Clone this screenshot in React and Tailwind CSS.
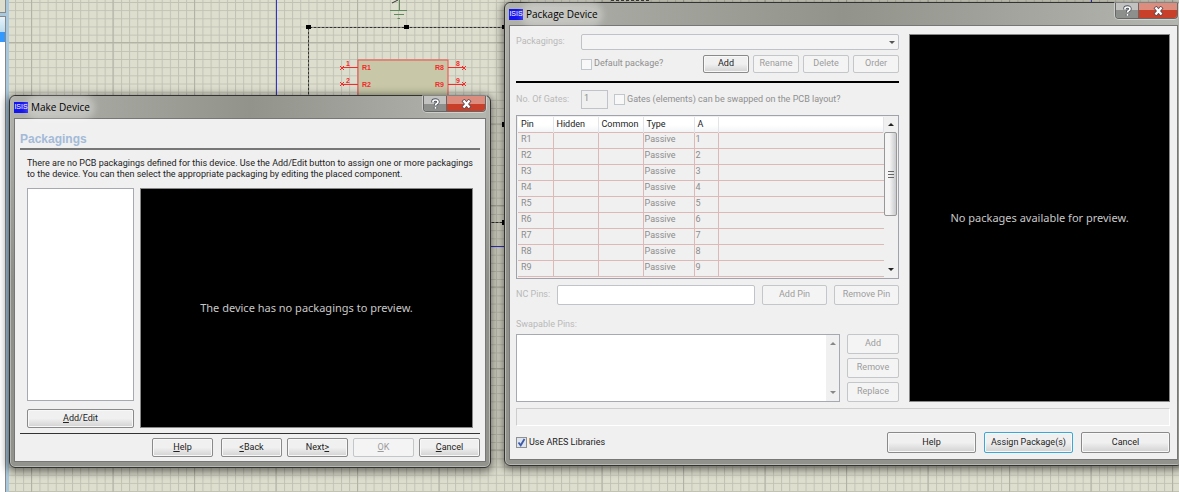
import React, { useState } from 'react';
import clsx from 'clsx';

const PINS = ['R1', 'R2', 'R3', 'R4', 'R5', 'R6', 'R7', 'R8', 'R9'];

// Schematic sheet behind the dialogs
const Schematic = () => (
  <svg className="absolute inset-0 h-full w-full" aria-hidden="true">
    <defs>
      <pattern id="minor" x="31.3" y="42.8" width="8.15" height="8.15" patternUnits="userSpaceOnUse">
        <path d="M0 .5H8.15M.5 0V8.15" stroke="#c2c2b4" />
      </pattern>
      <pattern id="major" x="31" y="42" width="81.5" height="81.5" patternUnits="userSpaceOnUse">
        <path d="M0 .5H81.5M.5 0V81.5" stroke="#b2b2a5" />
      </pattern>
    </defs>
    <rect width="100%" height="100%" fill="#dedecf" />
    <rect width="100%" height="100%" fill="url(#minor)" />
    <rect width="100%" height="100%" fill="url(#major)" />
    <path d="M276.5 0V246.5H1091.5V0" fill="none" stroke="#3434c4" />
    <path d="M308.5 222.5V27.5H504.5V222.5H308.5" fill="none" stroke="#333" strokeDasharray="3 1" />
    <path d="M306 25h5v4h-5zM404 25h5v4h-5zM502 25h5v4h-5zM502 122h5v5h-5zM502 220h5v5h-5z" fill="#000" />
    <path d="M399.500 0V10.500M390 10.500H407M394 14.500H404M397.500 18.500H400" fill="none" stroke="#5d8a5d" />
    <path d="M392 3l6-3" fill="none" stroke="#333" />
    <path d="M611 .500h38" stroke="#444" strokeDasharray="3 2" />
    <rect x="358" y="60" width="90" height="130" fill="#c8c8a8" stroke="#f24a4a" />
    <g stroke="#f22b2b" fill="none">
      <path d="M342 67.500H358M342 84.500H358M448 67.500H464M448 84.500H464" />
      <path d="M340 66l4 4m0-4l-4 4M340 82l4 4m0-4l-4 4M462 66l4 4m0-4l-4 4M462 82l4 4m0-4l-4 4" />
    </g>
    <g fill="#f22b2b" className="font-['Liberation_Sans'] text-[7px] font-bold">
      <text x="362" y="70">R1</text>
      <text x="362" y="87">R2</text>
      <text x="435" y="70">R8</text>
      <text x="435" y="87">R9</text>
      <text x="346" y="66">1</text>
      <text x="346" y="83">2</text>
      <text x="456" y="66">8</text>
      <text x="456" y="83">9</text>
    </g>
  </svg>
);

// Edge of the object selector pane
const SidePane = () => (
  <div className="absolute inset-y-0 left-0 flex w-[9px] flex-col border-r-[3px] border-[#a9c8de]">
    <div className="h-[13px] border-r border-b border-[#888] bg-[#dedecf]" />
    <div className="h-[3px] bg-[#a9c8de]" />
    <div className="h-4 border-t border-r border-[#888] bg-linear-to-b from-[#e6f3fb] to-[#bcdcee]" />
    <div className="h-[10px] border-r border-[#888] bg-[#3399ff]" />
    <div className="flex-1 border-r border-[#888] bg-white" />
  </div>
);

const Window = ({ title, className, children }) => (
  <section
    aria-label={title}
    className={clsx(
      'absolute rounded-md border border-[#333] bg-linear-to-b from-[#b4b5ae] via-[#8e8f89] to-[#92938c] px-1 pb-[5px] shadow-[0_2px_8px_2px_rgba(0,0,0,0.5),inset_0_0_0_1px_#b8b9b2]',
      className
    )}
  >
    <header className="flex h-[22px] items-start justify-between bg-linear-to-r from-[#b0b1aa] via-[#92938b] to-[#b3b5af]">
      <div className="flex h-full items-center gap-[3px]">
        <span className="flex h-[11px] w-[14px] items-center justify-center bg-[#1414ee] font-['Liberation_Sans'] text-[7px] text-white">
          ISIS
        </span>
        <h1 className="rounded-full bg-white/30 font-['Open_Sans',sans-serif] text-[10px] text-black shadow-[0_0_6px_5px_rgba(255,255,255,0.3)]">
          {title}
        </h1>
      </div>
      <div className="flex h-4 overflow-hidden rounded-b border border-t-0 border-[#666] shadow-[0_0_0_1px_rgba(255,255,255,0.4)]">
        <button
          type="button"
          aria-label="Help"
          className="flex w-[23px] items-center justify-center border-r border-[#666] bg-linear-to-b from-[#c2c3c0] from-50% to-[#8d8f8c] to-50%"
        >
          <svg width="9" height="12" viewBox="0 0 9 12" fill="none">
            <path d="M2 4.500V3.500Q2 2 4.500 2T7 4Q7 5 5.500 5.800Q4.500 6.400 4.500 7.500M4.500 9V10.800" stroke="#4d525c" strokeWidth="3.400" />
            <path d="M2 4.500V3.500Q2 2 4.500 2T7 4Q7 5 5.500 5.800Q4.500 6.400 4.500 7.500M4.500 9V10.800" stroke="#fff" strokeWidth="1.700" />
          </svg>
        </button>
        <button
          type="button"
          aria-label="Close"
          className="flex w-[38px] items-center justify-center bg-linear-to-b from-[#dd8d7e] from-50% to-[#c8402a] to-50%"
        >
          <svg width="11" height="10" viewBox="0 0 11 10" fill="none">
            <path d="M2 1L9 9M9 1L2 9" stroke="#5f4a52" strokeWidth="4" />
            <path d="M2.500 1.500L8.500 8.500M8.500 1.500L2.500 8.500" stroke="#fff" strokeWidth="2.300" />
          </svg>
        </button>
      </div>
    </header>
    <div className="border border-[#777] bg-[#f0f0f0] font-['Roboto',sans-serif] text-[9px] text-[#222]">
      {children}
    </div>
  </section>
);

const Button = ({ children, className, primary, disabled }) => (
  <button
    type="button"
    disabled={disabled}
    className={clsx(
      'flex items-center justify-center rounded-xs border whitespace-nowrap',
      disabled && 'border-[#c3c7ca] bg-[#f4f4f4] text-[#9c9c9c]',
      !disabled && 'bg-linear-to-b from-[#f0f0f0] from-50% to-[#d2d2d2] inset-shadow-[0_0_0_1px_#f8f8f8]',
      !disabled && (primary ? 'border-[#3ca6d6] ring-1 ring-[#8fd8f5] ring-inset' : 'border-[#8a8a8a]'),
      className
    )}
  >
    {children}
  </button>
);

const Checkbox = ({ label, disabled, checked, onChange }) => (
  <label className={clsx('flex items-center gap-0.5 whitespace-nowrap', disabled ? 'text-[#8f8f8f]' : 'text-[#222]')}>
    <span className="grid">
      <input
        type="checkbox"
        disabled={disabled}
        checked={checked}
        onChange={onChange}
        className={clsx(
          'col-start-1 row-start-1 size-[11px] appearance-none border',
          disabled ? 'border-[#c0c8cc] bg-[#f8f8f8]' : 'border-[#8e8f8f] bg-[#dfe5ee]'
        )}
      />
      {checked && (
        <svg className="pointer-events-none col-start-1 row-start-1" width="11" height="11" viewBox="0 0 11 11" fill="none">
          <path d="M2.500 5.500L4.700 8.300L8.500 2" stroke="#3d5aa8" strokeWidth="1.800" />
        </svg>
      )}
    </span>
    {label}
  </label>
);

const Arrow = ({ up, className }) => (
  <svg width="6" height="3" viewBox="0 0 6 3" className={className} aria-hidden="true">
    <path d={up ? 'M0 3L3 0L6 3Z' : 'M0 0H6L3 3Z'} fill="currentColor" />
  </svg>
);

const Preview = ({ children, className }) => (
  <div
    className={clsx(
      "flex items-center justify-center border border-[#888] bg-black font-['Noto_Sans',sans-serif] text-[11px] text-[#c8c8c8]",
      className
    )}
  >
    {children}
  </div>
);

const MakeDevice = () => (
  <Window title="Make Device" className="top-[95px] left-[9px] w-[482px]">
    <div className="px-[5px] pb-1">
      <h2 className="border-b-2 border-[#777] pt-3 font-['Liberation_Sans',sans-serif] text-xs leading-[17px] font-bold text-[#a3bad8]">
        Packagings
      </h2>
      <div className="px-[7px] pt-2">
        <p className="leading-[11px]">
          There are no PCB packagings defined for this device. Use the Add/Edit button to assign one or more packagings
          <br />
          to the device. You can then select the appropriate packaging by editing the placed component.
        </p>
        <div className="flex gap-1.5 pt-2 pb-[5px]">
          <div className="flex w-[107px] flex-col gap-2">
            <div role="listbox" aria-label="Packagings" className="flex-1 border border-[#a6a9b0] bg-white" />
            <Button className="h-[19px]">
              <span>
                <u>A</u>dd/Edit
              </span>
            </Button>
          </div>
          <Preview className="h-60 flex-1">The device has no packagings to preview.</Preview>
        </div>
      </div>
      <div className="flex justify-end gap-[5px] border-t border-[#333] pt-1">
        <Button className="mr-[3px] h-[19px] w-[61px]">
          <u>H</u>elp
        </Button>
        <Button className="h-[19px] w-[61px]">
          <u>&lt;</u>Back
        </Button>
        <Button className="h-[19px] w-[61px]">
          Next<u>&gt;</u>
        </Button>
        <Button className="h-[19px] w-[61px]" disabled>
          <u>O</u>K
        </Button>
        <Button className="h-[19px] w-[61px]">
          <u>C</u>ancel
        </Button>
      </div>
    </div>
  </Window>
);

const PinTable = () => (
  <div className="flex h-[164px] border border-[#a0a3ac] p-px pb-0">
    <div className="flex-1 overflow-hidden">
      <table className="w-full table-fixed border-collapse text-left">
        <colgroup>
          <col className="w-[35px]" />
          <col className="w-[45px]" />
          <col className="w-[45px]" />
          <col className="w-[51px]" />
          <col className="w-6" />
          <col />
        </colgroup>
        <thead>
          <tr className="h-[15px] bg-linear-to-b from-white from-50% to-[#f0f2f4]">
            {['Pin', 'Hidden', 'Common', 'Type', 'A', ''].map((name) => (
              <th key={name} className="border-r border-[#e2e4e8] p-0 pl-[3px] leading-[15px] font-normal">
                {name}
              </th>
            ))}
          </tr>
        </thead>
        <tbody className="text-[#8c8c8c]">
          {PINS.map((pin, i) => (
            <tr key={pin} className="h-4">
              <td className="border border-l-0 border-[#dcb8b6] p-0 pl-[3px] align-top leading-[12px]">{pin}</td>
              <td className="border border-[#dcb8b6] p-0" />
              <td className="border border-[#dcb8b6] p-0" />
              <td className="border border-[#dcb8b6] p-0 pl-px align-top leading-[12px]">Passive</td>
              <td className="border border-[#dcb8b6] p-0 pl-px align-top leading-[12px]">{i + 1}</td>
              <td className="border border-r-0 border-[#dcb8b6] p-0" />
            </tr>
          ))}
        </tbody>
      </table>
    </div>
    <div className="flex w-[13px] flex-col items-center bg-[#f0f0f0]">
      <div className="flex h-[15px] items-center">
        <Arrow up />
      </div>
      <div className="flex h-[84px] w-[13px] flex-col items-center justify-center gap-0.5 rounded-xs border border-[#989898] bg-linear-to-r from-[#f5f5f5] from-40% to-[#c9cacd]">
        <i className="h-px w-1.5 bg-[#666]" />
        <i className="h-px w-1.5 bg-[#666]" />
        <i className="h-px w-1.5 bg-[#666]" />
      </div>
      <Arrow className="mt-auto mb-[7px]" />
    </div>
  </div>
);

const PackageDevice = () => {
  const [useAres, setUseAres] = useState(true);

  return (
    <Window title="Package Device" className="top-[2px] -right-1 left-[504px]">
      <div className="pt-2 pr-[7px] pb-1.5 pl-1.5">
        <div className="flex gap-[10px]">
          <div className="flex w-[383px] flex-col">
            <div className="flex items-center">
              <label htmlFor="packagings" className="w-[65px] text-[#b9b9b9]">
                Packagings:
              </label>
              <div className="grid flex-1 items-center">
                <select
                  id="packagings"
                  disabled
                  className="col-start-1 row-start-1 h-4 w-full appearance-none rounded-xs border border-[#bfc2c6] bg-[#f4f4f4]"
                />
                <Arrow className="pointer-events-none col-start-1 row-start-1 mr-1 justify-self-end text-[#555]" />
              </div>
            </div>
            <div className="mt-[5px] flex h-[18px] gap-1 pl-[65px]">
              <div className="flex flex-1 items-center">
                <Checkbox label="Default package?" disabled />
              </div>
              <Button className="w-[46px]">Add</Button>
              <Button className="w-[46px]" disabled>
                Rename
              </Button>
              <Button className="w-[46px]" disabled>
                Delete
              </Button>
              <Button className="w-[46px]" disabled>
                Order
              </Button>
            </div>
            <hr className="mt-2 border-t-2 border-black" />
            <div className="mt-[7px] flex items-center gap-1.5">
              <label htmlFor="gates" className="w-[59px] whitespace-nowrap text-[#b9b9b9]">
                No. Of Gates:
              </label>
              <input
                id="gates"
                disabled
                defaultValue="1"
                className="h-[19px] w-[27px] border border-[#c0c3c7] px-0.5 pb-1 text-[#8c8c8c]"
              />
              <Checkbox label="Gates (elements) can be swapped on the PCB layout?" disabled />
            </div>
            <div className="mt-1.5">
              <PinTable />
            </div>
            <div className="mt-1.5 flex h-5 gap-[7px]">
              <label htmlFor="nc-pins" className="w-[34px] self-center whitespace-nowrap text-[#b9b9b9]">
                NC Pins:
              </label>
              <input id="nc-pins" disabled className="min-w-0 flex-1 rounded-xs border border-[#c0c3c7] bg-white px-1" />
              <Button className="w-[65px]" disabled>
                Add Pin
              </Button>
              <Button className="w-[65px]" disabled>
                Remove Pin
              </Button>
            </div>
            <p id="swapable" className="mt-3 mb-[2px] leading-[15px] text-[#b9b9b9]">
              Swapable Pins:
            </p>
            <div className="flex h-[68px] gap-[7px]">
              <div role="listbox" aria-labelledby="swapable" className="flex flex-1 border border-[#a6a9b0] bg-white">
                <div className="ml-auto flex w-[13px] flex-col items-center justify-between bg-[#f0f0f0] py-[7px] text-[#888]">
                  <Arrow up />
                  <Arrow />
                </div>
              </div>
              <div className="flex w-[52px] flex-col gap-1">
                <Button className="flex-1" disabled>
                  Add
                </Button>
                <Button className="flex-1" disabled>
                  Remove
                </Button>
                <Button className="flex-1" disabled>
                  Replace
                </Button>
              </div>
            </div>
          </div>
          <Preview className="flex-1">No packages available for preview.</Preview>
        </div>
        <div className="mt-1.5 h-[18px] border border-[#cdcdcd] border-r-white border-b-white" />
        <footer className="mt-1.5 flex h-[21px] items-center justify-between">
          <Checkbox label="Use ARES Libraries" checked={useAres} onChange={() => setUseAres(!useAres)} />
          <div className="flex h-full gap-2">
            <Button className="w-[89px]">Help</Button>
            <Button className="w-[89px]" primary>
              Assign Package(s)
            </Button>
            <Button className="w-[89px]">Cancel</Button>
          </div>
        </footer>
      </div>
    </Window>
  );
};

export default function App() {
  return (
    <main className="relative min-h-screen w-full overflow-hidden">
      <Schematic />
      <SidePane />
      <MakeDevice />
      <PackageDevice />
    </main>
  );
}
